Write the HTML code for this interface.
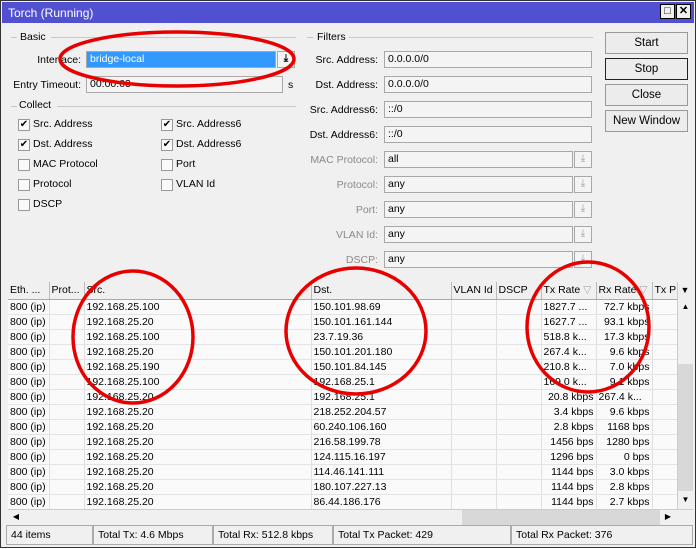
<!DOCTYPE html>
<html><head><style>
*{box-sizing:border-box;margin:0;padding:0}
body{width:696px;height:548px;background:#fff;font-family:"Liberation Sans",sans-serif;font-size:10.5px;color:#000;position:relative;overflow:hidden}
.win{position:absolute;left:0;top:0;width:696px;height:548px;background:#f0f0f0;border:1px solid #333}
.title{position:absolute;left:1px;top:1px;width:692px;height:21px;background:#5050d0;color:#fff;font-size:12px;padding:4px 0 0 6px}
.tb{position:absolute;top:3px;width:15px;height:15px;background:#f0f0f0;border:1px solid #000;font-size:11px;text-align:center;line-height:13px;color:#000;font-weight:bold}
.a{position:absolute;white-space:nowrap}
.grp{position:absolute;height:1px;background:#c8c8c8}
.inp{position:absolute;height:17px;background:#f4f4f4;border:1px solid #a8a8a8;padding:0 3px;line-height:15px;white-space:nowrap}
.dd{position:absolute;width:18px;height:17px;border:1px solid #a8a8a8;background:#f4f4f4;text-align:center;font-size:10px;line-height:14px;color:#999}
.lbl{position:absolute;text-align:right;white-space:nowrap}
.g{color:#8a8a8a}
.cb{position:absolute;width:12px;height:12px;border:1px solid #999;background:#fafafa;font-size:10px;line-height:10px;text-align:center}
.btn{position:absolute;left:604px;width:83px;height:22px;border:1px solid #999;background:#ececec;text-align:center;line-height:20px;font-size:11.5px}
table{position:absolute;left:7px;top:281px;width:669px;border-collapse:collapse;table-layout:fixed;background:#fafafa}
td{height:15px;border-right:1px solid #e0e0e0;border-bottom:1px solid #e4e4e4;padding:0 2px;white-space:nowrap;overflow:hidden;font-size:10.5px;line-height:14px}
tr.h td{height:17px;background:#f0f0f0;border-right:1px solid #bbb;border-bottom:1px solid #aaa}
.r{text-align:right}
.st{position:absolute;top:524px;height:20px;border:1px solid #aaa;background:#f0f0f0;padding:3px 4px;white-space:nowrap}
</style></head><body>
<div class="win">
<div class="title">Torch (Running)</div>
<div class="tb" style="left:659px">□</div><div class="tb" style="left:675px">✕</div>

<div class="a" style="left:19px;top:30px">Basic</div><div class="grp" style="left:50px;top:36px;width:245px"></div><div class="grp" style="left:10px;top:36px;width:6px"></div>
<div class="lbl" style="left:0;width:80px;top:53px">Interface:</div>
<div class="inp" style="left:85px;top:50px;width:190px;background:#3399ff;color:#fff">bridge-local</div>
<div class="dd" style="left:276px;top:50px;color:#000;font-weight:bold">⤓</div>
<div class="lbl" style="left:0;width:80px;top:78px">Entry Timeout:</div>
<div class="inp" style="left:85px;top:75px;width:197px">00:00:03</div>
<div class="a" style="left:287px;top:78px">s</div>
<div class="a" style="left:18px;top:98px">Collect</div><div class="grp" style="left:56px;top:105px;width:239px"></div><div class="grp" style="left:10px;top:105px;width:6px"></div>

<div class="cb" style="left:17px;top:118px">✔</div><div class="a" style="left:32px;top:117px">Src. Address</div>
<div class="cb" style="left:17px;top:138px">✔</div><div class="a" style="left:32px;top:137px">Dst. Address</div>
<div class="cb" style="left:17px;top:158px"></div><div class="a" style="left:32px;top:157px">MAC Protocol</div>
<div class="cb" style="left:17px;top:178px"></div><div class="a" style="left:32px;top:177px">Protocol</div>
<div class="cb" style="left:17px;top:198px"></div><div class="a" style="left:32px;top:197px">DSCP</div>
<div class="cb" style="left:160px;top:118px">✔</div><div class="a" style="left:175px;top:117px">Src. Address6</div>
<div class="cb" style="left:160px;top:138px">✔</div><div class="a" style="left:175px;top:137px">Dst. Address6</div>
<div class="cb" style="left:160px;top:158px"></div><div class="a" style="left:175px;top:157px">Port</div>
<div class="cb" style="left:160px;top:178px"></div><div class="a" style="left:175px;top:177px">VLAN Id</div>

<div class="a" style="left:316px;top:30px">Filters</div><div class="grp" style="left:348px;top:36px;width:244px"></div><div class="grp" style="left:306px;top:36px;width:6px"></div>
<div class="lbl" style="left:300px;width:77px;top:53px">Src. Address:</div><div class="inp" style="left:383px;top:50px;width:208px">0.0.0.0/0</div>
<div class="lbl" style="left:300px;width:77px;top:78px">Dst. Address:</div><div class="inp" style="left:383px;top:75px;width:208px">0.0.0.0/0</div>
<div class="lbl" style="left:300px;width:77px;top:103px">Src. Address6:</div><div class="inp" style="left:383px;top:100px;width:208px">::/0</div>
<div class="lbl" style="left:300px;width:77px;top:128px">Dst. Address6:</div><div class="inp" style="left:383px;top:125px;width:208px">::/0</div>
<div class="lbl g" style="left:300px;width:77px;top:153px">MAC Protocol:</div><div class="inp" style="left:383px;top:150px;width:189px">all</div><div class="dd" style="left:573px;top:150px">⤓</div>
<div class="lbl g" style="left:300px;width:77px;top:178px">Protocol:</div><div class="inp" style="left:383px;top:175px;width:189px">any</div><div class="dd" style="left:573px;top:175px">⤓</div>
<div class="lbl g" style="left:300px;width:77px;top:203px">Port:</div><div class="inp" style="left:383px;top:200px;width:189px">any</div><div class="dd" style="left:573px;top:200px">⤓</div>
<div class="lbl g" style="left:300px;width:77px;top:228px">VLAN Id:</div><div class="inp" style="left:383px;top:225px;width:189px">any</div><div class="dd" style="left:573px;top:225px">⤓</div>
<div class="lbl g" style="left:300px;width:77px;top:253px">DSCP:</div><div class="inp" style="left:383px;top:250px;width:189px">any</div><div class="dd" style="left:573px;top:250px">⤓</div>

<div class="btn" style="top:31px">Start</div>
<div class="btn" style="top:57px;border:1px solid #222">Stop</div>
<div class="btn" style="top:83px">Close</div>
<div class="btn" style="top:109px">New Window</div>

<table>
<colgroup><col style="width:41px"><col style="width:35px"><col style="width:227px"><col style="width:140px"><col style="width:45px"><col style="width:45px"><col style="width:55px"><col style="width:56px"><col style="width:25px"></colgroup>
<tr class="h"><td>Eth. ...</td><td>Prot...</td><td>Src.</td><td>Dst.</td><td>VLAN Id</td><td>DSCP</td><td>Tx Rate <span style="color:#aaa">▽</span></td><td>Rx Rate <span style="color:#aaa">▽</span></td><td>Tx P</td></tr>
<tr><td>800 (ip)</td><td></td><td>192.168.25.100</td><td>150.101.98.69</td><td></td><td></td><td>1827.7 ...</td><td class="r">72.7 kbps</td><td></td></tr>
<tr><td>800 (ip)</td><td></td><td>192.168.25.20</td><td>150.101.161.144</td><td></td><td></td><td>1627.7 ...</td><td class="r">93.1 kbps</td><td></td></tr>
<tr><td>800 (ip)</td><td></td><td>192.168.25.100</td><td>23.7.19.36</td><td></td><td></td><td>518.8 k...</td><td class="r">17.3 kbps</td><td></td></tr>
<tr><td>800 (ip)</td><td></td><td>192.168.25.20</td><td>150.101.201.180</td><td></td><td></td><td>267.4 k...</td><td class="r">9.6 kbps</td><td></td></tr>
<tr><td>800 (ip)</td><td></td><td>192.168.25.190</td><td>150.101.84.145</td><td></td><td></td><td>210.8 k...</td><td class="r">7.0 kbps</td><td></td></tr>
<tr><td>800 (ip)</td><td></td><td>192.168.25.100</td><td>192.168.25.1</td><td></td><td></td><td>169.0 k...</td><td class="r">9.1 kbps</td><td></td></tr>
<tr><td>800 (ip)</td><td></td><td>192.168.25.20</td><td>192.168.25.1</td><td></td><td></td><td class="r">20.8 kbps</td><td>267.4 k...</td><td></td></tr>
<tr><td>800 (ip)</td><td></td><td>192.168.25.20</td><td>218.252.204.57</td><td></td><td></td><td class="r">3.4 kbps</td><td class="r">9.6 kbps</td><td></td></tr>
<tr><td>800 (ip)</td><td></td><td>192.168.25.20</td><td>60.240.106.160</td><td></td><td></td><td class="r">2.8 kbps</td><td class="r">1168 bps</td><td></td></tr>
<tr><td>800 (ip)</td><td></td><td>192.168.25.20</td><td>216.58.199.78</td><td></td><td></td><td class="r">1456 bps</td><td class="r">1280 bps</td><td></td></tr>
<tr><td>800 (ip)</td><td></td><td>192.168.25.20</td><td>124.115.16.197</td><td></td><td></td><td class="r">1296 bps</td><td class="r">0 bps</td><td></td></tr>
<tr><td>800 (ip)</td><td></td><td>192.168.25.20</td><td>114.46.141.111</td><td></td><td></td><td class="r">1144 bps</td><td class="r">3.0 kbps</td><td></td></tr>
<tr><td>800 (ip)</td><td></td><td>192.168.25.20</td><td>180.107.227.13</td><td></td><td></td><td class="r">1144 bps</td><td class="r">2.8 kbps</td><td></td></tr>
<tr><td>800 (ip)</td><td></td><td>192.168.25.20</td><td>86.44.186.176</td><td></td><td></td><td class="r">1144 bps</td><td class="r">2.7 kbps</td><td></td></tr>
</table>
<div style="position:absolute;left:676px;top:281px;width:16px;height:227px;background:#f0f0f0;border-left:1px solid #ccc"></div>
<div style="position:absolute;left:676px;top:281px;width:16px;height:17px;font-size:9px;text-align:center;line-height:16px">▼</div>
<div style="position:absolute;left:677px;top:298px;width:15px;height:16px;font-size:8px;text-align:center;line-height:16px">▲</div>
<div style="position:absolute;left:677px;top:363px;width:15px;height:127px;background:#d8d8d8"></div>
<div style="position:absolute;left:677px;top:491px;width:15px;height:16px;font-size:8px;text-align:center;line-height:16px">▼</div>
<div style="position:absolute;left:7px;top:508px;width:685px;height:16px;background:#f0f0f0;border-top:1px solid #ccc"></div>
<div style="position:absolute;left:8px;top:509px;width:14px;height:14px;font-size:8px;line-height:14px;text-align:center">◀</div>
<div style="position:absolute;left:461px;top:509px;width:198px;height:15px;background:#d8d8d8"></div>
<div style="position:absolute;left:660px;top:509px;width:14px;height:14px;font-size:8px;line-height:14px;text-align:center">▶</div>

<div class="st" style="left:5px;width:87px">44 items</div>
<div class="st" style="left:92px;width:120px">Total Tx: 4.6 Mbps</div>
<div class="st" style="left:212px;width:120px">Total Rx: 512.8 kbps</div>
<div class="st" style="left:332px;width:178px">Total Tx Packet: 429</div>
<div class="st" style="left:510px;width:182px">Total Rx Packet: 376</div>

<svg style="position:absolute;left:0;top:0" width="696" height="548">
<g fill="none" stroke="#e80000" stroke-width="3.5">
<ellipse cx="176" cy="58" rx="117" ry="27"/>
<ellipse cx="132" cy="336" rx="60" ry="66"/>
<ellipse cx="355" cy="330" rx="70" ry="63"/>
<ellipse cx="587" cy="326" rx="61" ry="65"/>
</g></svg>
</div>
</body></html>
